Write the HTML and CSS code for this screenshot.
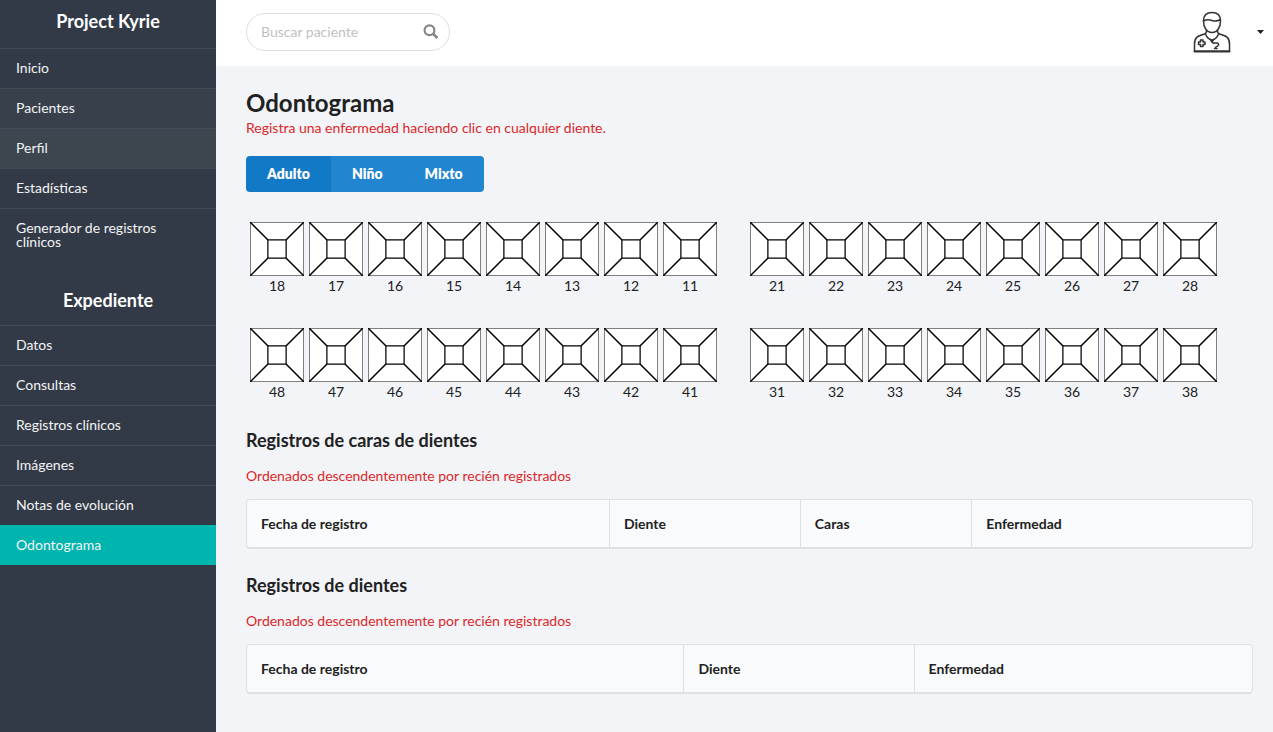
FILE: index.html
```html
<!DOCTYPE html>
<html lang="es">
<head>
<meta charset="utf-8">
<title>Project Kyrie</title>
<link rel="stylesheet" href="styles.css">
</head>
<body>
<svg class="defs" aria-hidden="true">
  <symbol id="tooth" viewBox="0 0 54 54">
    <polygon points="0,0 54,0 36,18 18,18"/>
    <polygon points="18,36 36,36 54,54 0,54"/>
    <polygon points="36,18 54,0 54,54 36,36"/>
    <polygon points="0,0 18,18 18,36 0,54"/>
    <polygon points="18,18 36,18 36,36 18,36"/>
    <path stroke-width="1.5" d="M0 0L18 18M54 0L36 18M0 54L18 36M54 54L36 36"/>
  </symbol>
</svg>
<div class="app">
  <aside class="sidebar">
    <h2 class="sidebar-title">Project Kyrie</h2>
    <nav class="menu">
      <a class="item" href="#">Inicio</a>
      <a class="item item-fading" href="#">Pacientes</a>
      <a class="item item-hover" href="#">Perfil</a>
      <a class="item" href="#">Estadísticas</a>
      <a class="item" href="#">Generador de registros clínicos</a>
    </nav>
    <h2 class="sidebar-title sidebar-title-record">Expediente</h2>
    <nav class="menu">
      <a class="item" href="#">Datos</a>
      <a class="item" href="#">Consultas</a>
      <a class="item" href="#">Registros clínicos</a>
      <a class="item" href="#">Imágenes</a>
      <a class="item" href="#">Notas de evolución</a>
      <a class="item item-active" href="#" aria-current="page">Odontograma</a>
    </nav>
  </aside>
  <div class="page">
    <header class="topbar">
      <form class="search">
        <input class="search-input" type="text" placeholder="Buscar paciente" aria-label="Buscar paciente">
        <button class="search-button" type="button" aria-label="Buscar">
          <svg width="16" height="16" viewBox="0 0 16 16" fill="none" stroke="#888" stroke-width="2.2">
            <circle cx="6.5" cy="6.3" r="4.9"/><path d="M10 9.8L14.4 14" stroke-width="2.8"/>
          </svg>
        </button>
      </form>
      <button class="account" type="button" aria-label="Cuenta">
        <svg width="40" height="44" viewBox="0 0 40 44" fill="none" stroke="#333" stroke-width="1.5" stroke-linejoin="round" stroke-linecap="round">
          <path d="M11.500 11C11.500 5 14.500 2.500 20 2.500S28.500 5 28.500 11C28.500 17 25.500 22.500 20 22.500S11.500 17 11.500 11Z"/>
          <path d="M11.500 11C14 9.500 17 9.500 20 10.500C23 11.500 26 11 28.500 9.500"/>
          <path d="M14.500 20.500C15 23 14 23.500 12 24.200C6 26 2.500 27 2.500 34V41.200H37.500V34C37.500 27 34 26 28 24.200C26 23.500 25 23 25.500 20.500"/>
          <path d="M13.500 24C15 28 17 29.500 20 30C23 29.500 25 28 26.500 24M18 29L20 32L22 29"/>
          <path d="M20 31.500C21 35.500 25 31 26.500 34C27.500 36.500 25 35.500 23.500 37.500M22.500 38.500H25"/>
          <path d="M2.500 41.500H37.500" stroke-width="2"/>
          <path d="M8.500 30H11V32H13V34.500H11V36.500H8.500V34.500H6.500V32H8.500Z"/>
        </svg>
        <svg class="caret" width="7" height="4" viewBox="0 0 7 4"><path d="M0 0H7L3.500 4Z" fill="#222"/></svg>
      </button>
    </header>
    <main class="content">
      <h1 class="title">Odontograma</h1>
      <p class="hint">Registra una enfermedad haciendo clic en cualquier diente.</p>
      <div class="buttons" role="group" aria-label="Tipo de dentadura">
        <button class="button button-active" type="button">Adulto</button>
        <button class="button" type="button">Niño</button>
        <button class="button" type="button">Mixto</button>
      </div>
      <div class="chart">
        <div class="jaw"><div class="quadrant" data-teeth="18 17 16 15 14 13 12 11"></div><div class="quadrant" data-teeth="21 22 23 24 25 26 27 28"></div></div>
        <div class="jaw"><div class="quadrant" data-teeth="48 47 46 45 44 43 42 41"></div><div class="quadrant" data-teeth="31 32 33 34 35 36 37 38"></div></div>
      </div>
      <section class="records">
        <h2 class="subtitle">Registros de caras de dientes</h2>
        <p class="hint">Ordenados descendentemente por recién registrados</p>
        <table class="table">
          <thead><tr><th>Fecha de registro</th><th>Diente</th><th>Caras</th><th>Enfermedad</th></tr></thead>
        </table>
      </section>
      <section class="records">
        <h2 class="subtitle">Registros de dientes</h2>
        <p class="hint">Ordenados descendentemente por recién registrados</p>
        <table class="table">
          <thead><tr><th>Fecha de registro</th><th>Diente</th><th>Enfermedad</th></tr></thead>
        </table>
      </section>
    </main>
  </div>
</div>
<script src="teeth.js"></script>
</body>
</html>
```

FILE: styles.css
```css
* {
  box-sizing: border-box;
}

body {
  margin: 0;
  background: #f2f4f8;
  color: #212121;
  font: 14px/20px Lato, sans-serif;
}

h1, h2, p {
  margin: 0;
}

button, input {
  font: inherit;
}

.defs {
  position: absolute;
  width: 0;
  height: 0;
}

.app {
  display: flex;
  min-height: 100vh;
}

/* Sidebar */
.sidebar {
  flex: 0 0 216px;
  background: #333a47;
  color: #fff;
}

.sidebar-title {
  padding: 9px 16px 15px;
  font-size: 18px;
  line-height: 24px;
  text-align: center;
}

.sidebar-title-record {
  padding-top: 26px;
  padding-bottom: 13px;
}

.item {
  display: block;
  padding: 12px 16px 13px;
  border-top: 1px solid #434b58;
  color: #f3f4f5;
  line-height: 14px;
  text-decoration: none;
}

.item-fading {
  background: #38404b;
}

.item-hover {
  background: #3d454f;
}

.item-active {
  border-color: #00b5ad;
  background: #00b5ad;
}

/* Top bar */
.page {
  flex: 1;
  min-width: 0;
}

.topbar {
  display: flex;
  align-items: center;
  justify-content: space-between;
  height: 66px;
  padding: 0 9px 2px 30px;
  background: #fff;
}

.search {
  display: flex;
  align-items: center;
  width: 204px;
  height: 38px;
  padding: 0 10px 0 14px;
  border: 1px solid #dededf;
  border-radius: 20px;
}

.search-input {
  flex: 1;
  min-width: 0;
  padding: 0;
  border: 0;
  outline: 0;
  background: none;
}

.search-input::placeholder {
  color: #bfbfbf;
}

.search-button, .account {
  display: flex;
  align-items: center;
  padding: 0;
  border: 0;
  background: none;
}

.account {
  gap: 25px;
}

/* Content */
.content {
  padding: 22px 20px 30px 30px;
}

.title {
  font-size: 24px;
  line-height: 30px;
  font-weight: 700;
}

.hint {
  color: #db2828;
}

.buttons {
  display: inline-flex;
  margin: 18px 0 30px;
  border-radius: 4px;
  overflow: hidden;
}

.button {
  height: 36px;
  padding: 0 21px;
  border: 0;
  background: #2185d0;
  color: #fff;
  font-weight: 800;
}

.button-active {
  background: #1279c6;
}

.chart {
  display: grid;
  gap: 32px;
  padding: 0 0 2px 4px;
}

.jaw {
  display: flex;
  gap: 33px;
}

.quadrant {
  display: flex;
  gap: 5px;
}

.tooth {
  width: 54px;
  padding: 0;
  border: 0;
  background: none;
  color: #212121;
  text-align: center;
}

.tooth-faces {
  display: block;
  width: 54px;
  height: 54px;
  fill: #fff;
  stroke: #000;
}

.records {
  padding-top: 24px;
}

.subtitle {
  padding-bottom: 14px;
  font-size: 18px;
  line-height: 24px;
  font-weight: 700;
}

.table {
  width: 100%;
  margin-top: 13px;
  border: 1px solid #dfe0e2;
  border-bottom-width: 2px;
  border-radius: 4px;
  border-spacing: 0;
  background: #f9fafb;
}

.table th {
  padding: 14px 14px 13px;
  font-weight: 700;
  text-align: left;
}

.table th + th {
  border-left: 1px solid #dfe0e2;
}
```

FILE: teeth.js
```js
document.querySelectorAll('.quadrant').forEach(function (quadrant) {
  quadrant.innerHTML = quadrant.dataset.teeth.split(' ').map(function (number) {
    return '<button class="tooth" type="button">' +
      '<svg class="tooth-faces" aria-hidden="true"><use href="#tooth"/></svg>' +
      number + '</button>';
  }).join('');
});
```
